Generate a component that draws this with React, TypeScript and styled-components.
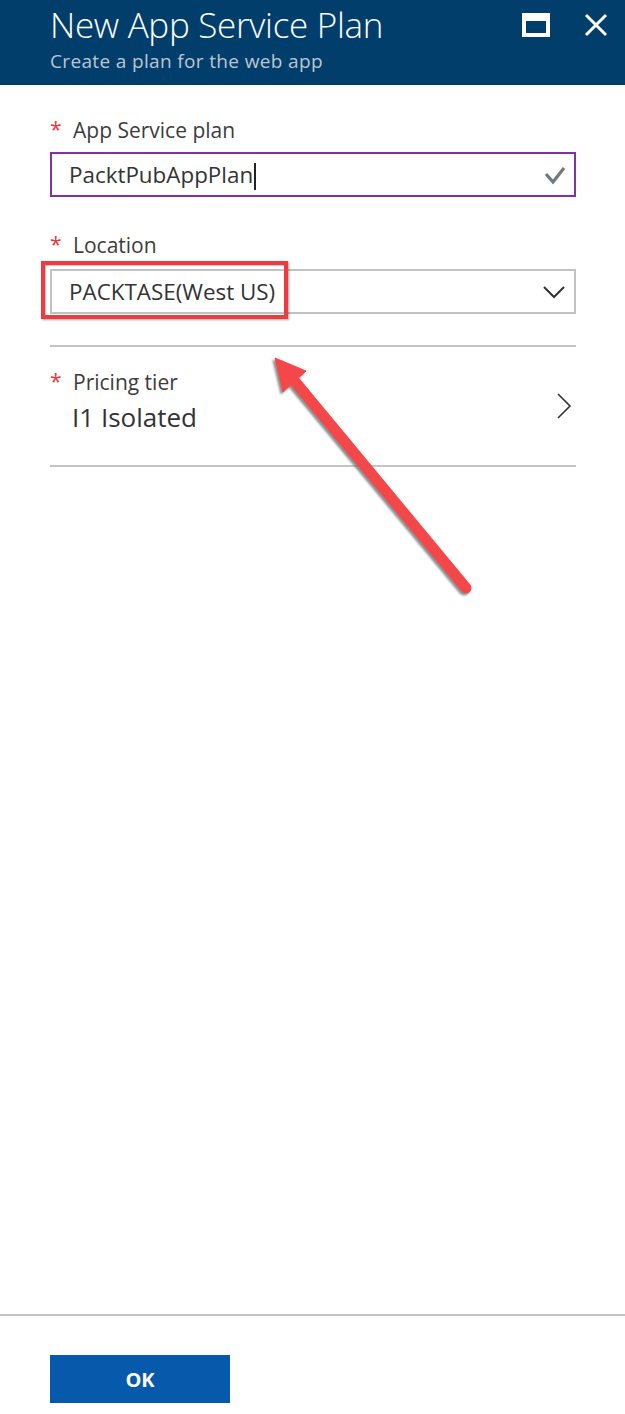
import React from "react";
import styled, {createGlobalStyle} from "styled-components";

const GlobalStyle = createGlobalStyle`
  html, body {
    margin: 0;
    padding: 0;
    background: #ffffff;
  }
  body {
    font-family: "Open Sans", "Noto Sans", "Liberation Sans", sans-serif;
    color: #3c3c3c;
  }
`;

const Page = styled.div`
    position: relative;
    width: 625px;
    min-height: 1414px;
    display: flex;
    flex-direction: column;
    overflow: hidden;
`;

const Header = styled.header`
    height: 85px;
    box-sizing: border-box;
    background: #023e6c;
    display: flex;
    justify-content: space-between;
    align-items: flex-start;
    padding: 0 17px 0 50px;
`;

const HeaderText = styled.div`
    display: flex;
    flex-direction: column;
`;

const Title = styled.h1`
    margin: 2px 0 0 0;
    font-size: 35px;
    font-weight: 300;
    line-height: 46px;
    color: #ffffff;
    letter-spacing: -0.3px;
`;

const Subtitle = styled.div`
    font-size: 19px;
    line-height: 22px;
    margin-top: 2px;
    color: #bcc6d0;
    letter-spacing: 0.35px;
`;

const HeaderButtons = styled.div`
    display: flex;
    align-items: center;
    gap: 34px;
    margin-top: 13px;
`;

const MaximizeBox = styled.div`
    width: 28px;
    height: 24px;
    box-sizing: border-box;
    border: 4px solid #ffffff;
    border-top-width: 8px;
`;

const Body = styled.main`
    display: flex;
    flex-direction: column;
    padding: 0 49px 0 50px;
`;

const Field = styled.div<{ $top: number }>`
    display: flex;
    flex-direction: column;
    margin-top: ${p => p.$top}px;
`;

const Label = styled.label`
    display: flex;
    align-items: flex-start;
    font-size: 21px;
    line-height: 26px;
    color: #3c3c3c;
`;

const Star = styled.span`
    color: #e8383b;
    font-size: 21px;
    width: 23px;
    line-height: 24px;
`;

const InputBox = styled.div<{ $active?: boolean }>`
    position: relative;
    height: 45px;
    box-sizing: border-box;
    margin-top: ${p => p.$active ? 9 : 11}px;
    border: 2px solid ${p => p.$active ? "#8330a3" : "#c2c2c2"};
    display: flex;
    align-items: center;
    justify-content: space-between;
    padding: 0 8px 0 17px;
    font-size: 22.4px;
    color: #333333;
`;

const Caret = styled.span`
    display: inline-block;
    width: 2px;
    height: 27px;
    background: #222;
    vertical-align: middle;
    margin-left: 1px;
`;

const Highlight = styled.div`
    position: absolute;
    left: -11px;
    top: -10px;
    width: 247px;
    height: 58px;
    box-sizing: border-box;
    border: 4px solid #ef3b40;
    box-shadow: 1px 1px 2px rgba(0, 0, 0, 0.35), inset 1px 1px 1px rgba(0, 0, 0, 0.25);
    pointer-events: none;
`;

const Divider = styled.hr<{ $top?: number }>`
    margin: ${p => p.$top ?? 0}px 0 0 0;
    border: none;
    height: 2px;
    background: #c4c4c4;
`;

const PricingRow = styled.div`
    height: 118px;
    display: flex;
    align-items: center;
    justify-content: space-between;
    padding-right: 4px;
`;

const PricingText = styled.div`
    display: flex;
    flex-direction: column;
    margin-top: -8px;
`;

const Value = styled.div`
    font-size: 26px;
    line-height: 36px;
    color: #333333;
    margin: 4px 0 0 22px;
`;

const Spacer = styled.div`
    flex: 1;
`;

const Footer = styled.footer`
    border-top: 2px solid #c4c4c4;
    padding: 39px 0 11px 50px;
`;

const OkButton = styled.button`
    width: 180px;
    height: 48px;
    border: none;
    background: #0659ab;
    color: #ffffff;
    font-family: "Open Sans", "Liberation Sans", sans-serif;
    font-weight: 700;
    font-size: 20px;
    cursor: pointer;
`;

const Arrow = styled.svg`
    position: absolute;
    left: 0;
    top: 0;
    pointer-events: none;
`;

export default function App() {
  return (
      <>
        <GlobalStyle/>
        <Page>
          <Header>
            <HeaderText>
              <Title>New App Service Plan</Title>
              <Subtitle>Create a plan for the web app</Subtitle>
            </HeaderText>
            <HeaderButtons>
              <MaximizeBox/>
              <svg width="24" height="24" viewBox="0 0 24 24">
                <path d="M2 2 L22 22 M22 2 L2 22" stroke="#fff" strokeWidth="3" fill="none"/>
              </svg>
            </HeaderButtons>
          </Header>

          <Body>
            <Field $top={32}>
              <Label><Star>*</Star>App Service plan</Label>
              <InputBox $active>
                <span>PacktPubAppPlan<Caret/></span>
                <svg width="22" height="20" viewBox="0 0 22 20">
                  <path d="M2 9 L9 17 L20 3" stroke="#6f7a80" strokeWidth="3.2" fill="none"/>
                </svg>
              </InputBox>
            </Field>

            <Field $top={35}>
              <Label><Star>*</Star>Location</Label>
              <InputBox>
                <span>PACKTASE(West US)</span>
                <svg width="24" height="14" viewBox="0 0 24 14">
                  <path d="M2 2 L12 12 L22 2" stroke="#333" strokeWidth="2" fill="none"/>
                </svg>
                <Highlight/>
              </InputBox>
            </Field>

            <Divider $top={31}/>
            <PricingRow>
              <PricingText>
                <Label><Star>*</Star>Pricing tier</Label>
                <Value>I1 Isolated</Value>
              </PricingText>
              <svg width="16" height="26" viewBox="0 0 16 26">
                <path d="M2 1 L14 13 L2 25" stroke="#333" strokeWidth="1.6" fill="none"/>
              </svg>
            </PricingRow>
            <Divider/>
          </Body>

          <Spacer/>

          <Footer>
            <OkButton>OK</OkButton>
          </Footer>

          <Arrow width="625" height="1414" viewBox="0 0 625 1414">
            <defs>
              <filter id="shadow" x="-20%" y="-20%" width="140%" height="140%">
                <feDropShadow dx="-2" dy="2" stdDeviation="1" floodColor="#6b7070" floodOpacity="0.8"/>
              </filter>
            </defs>
            <g filter="url(#shadow)" fill="#f4464a" stroke="#f4464a">
              <line x1="466" y1="588" x2="292" y2="378" strokeWidth="11" strokeLinecap="round"/>
              <polygon points="275,358 306,371 283,392" strokeWidth="1" strokeLinejoin="round"/>
            </g>
          </Arrow>
        </Page>
      </>
  );
}
